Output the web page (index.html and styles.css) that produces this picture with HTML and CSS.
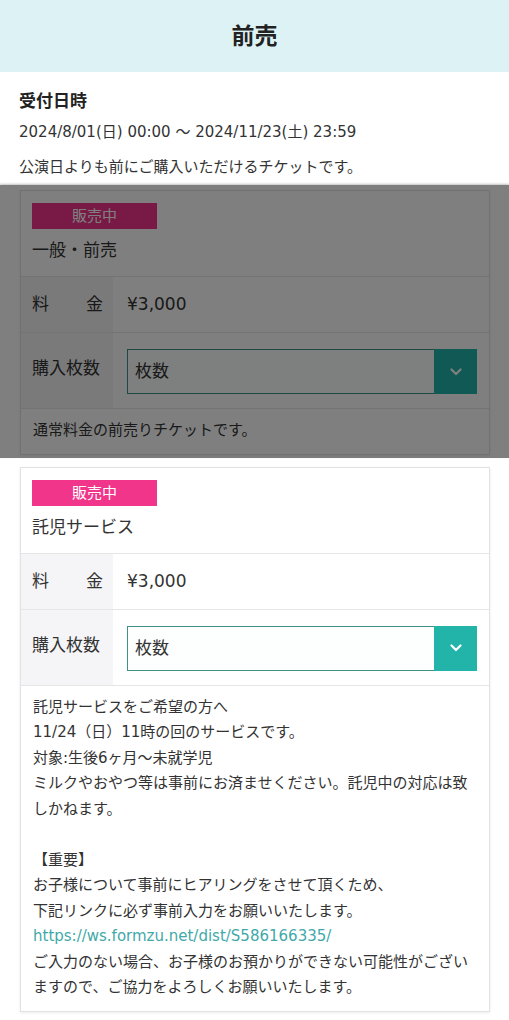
FILE: index.html
```html
<!DOCTYPE html>
<html lang="ja">
<head>
<meta charset="utf-8">
<title>前売</title>
<link rel="stylesheet" href="styles.css">
</head>
<body>
<header class="page-head"><h1 class="page-title">前売</h1></header>
<main class="content">
  <section class="intro">
    <h2 class="intro-head">受付日時</h2>
    <p class="intro-date">2024/8/01(日) 00:00 ～ 2024/11/23(土) 23:59</p>
    <p class="intro-desc">公演日よりも前にご購入いただけるチケットです。</p>
  </section>

  <div class="card">
    <div class="card-top">
      <span class="badge">販売中</span>
      <div class="card-title">一般・前売</div>
    </div>
    <div class="row row-price">
      <div class="row-label"><span class="justify">料金</span></div>
      <div class="row-value">¥3,000</div>
    </div>
    <div class="row row-qty">
      <div class="row-label">購入枚数</div>
      <div class="row-value">
        <div class="select"><span class="select-text">枚数</span><span class="select-btn"><svg width="12" height="8" viewBox="0 0 12 8"><path d="M1.5 1.5 L6 6 L10.5 1.5" fill="none" stroke="#fff" stroke-width="2.2" stroke-linecap="round" stroke-linejoin="round"/></svg></span></div>
      </div>
    </div>
    <div class="card-note">通常料金の前売りチケットです。</div>
  </div>

  <div class="card">
    <div class="card-top">
      <span class="badge">販売中</span>
      <div class="card-title">託児サービス</div>
    </div>
    <div class="row row-price">
      <div class="row-label"><span class="justify">料金</span></div>
      <div class="row-value">¥3,000</div>
    </div>
    <div class="row row-qty">
      <div class="row-label">購入枚数</div>
      <div class="row-value">
        <div class="select"><span class="select-text">枚数</span><span class="select-btn"><svg width="12" height="8" viewBox="0 0 12 8"><path d="M1.5 1.5 L6 6 L10.5 1.5" fill="none" stroke="#fff" stroke-width="2.2" stroke-linecap="round" stroke-linejoin="round"/></svg></span></div>
      </div>
    </div>
    <div class="card-note">託児サービスをご希望の方へ<br>11/24（日）11時の回のサービスです。<br>対象:生後6ヶ月～未就学児<br>ミルクやおやつ等は事前にお済ませください。託児中の対応は致しかねます。<br><br>【重要】<br>お子様について事前にヒアリングをさせて頂くため、<br>下記リンクに必ず事前入力をお願いいたします。<br><a class="link" href="#">https://ws.formzu.net/dist/S586166335/</a><br>ご入力のない場合、お子様のお預かりができない可能性がございますので、ご協力をよろしくお願いいたします。</div>
  </div>
</main>
<div class="overlay"></div>
</body>
</html>
```
FILE: styles.css
```css
* { box-sizing: border-box; }
html, body { margin: 0; padding: 0; }
body {
  font-family: "DejaVu Sans", "Noto Sans CJK JP", sans-serif;
  color: #333;
  background: #fff;
  position: relative;
  min-height: 1020px;
}
.page-head {
  background: #ddf2f4;
  height: 72px;
  display: flex;
  align-items: center;
  justify-content: center;
}
.page-title {
  margin: 0;
  font-size: 23px;
  font-weight: 700;
  color: #222;
  line-height: 1;
}
.content { padding: 0 19px 0 20px; }
.intro { padding: 15px 0 11px; margin-left: -1px; }
.intro-head {
  margin: 0;
  font-size: 17px;
  font-weight: 700;
  line-height: 28px;
  color: #222;
}
.intro-date {
  margin: 5px 0 0;
  font-size: 15px;
  line-height: 24px;
}
.intro-desc {
  margin: 11px 0 0;
  font-size: 15px;
  line-height: 24px;
}
.card {
  border: 1px solid #e2e2e2;
  box-shadow: 0 1px 3px rgba(0,0,0,0.08);
  background: #fff;
  margin-bottom: 12px;
}
.card-top {
  padding: 12px 12px 12px 11px;
  border-bottom: 1px solid #e6e6e6;
}
.badge {
  display: block;
  width: 125px;
  height: 26px;
  line-height: 26px;
  background: #f0358a;
  color: #fff;
  font-size: 15px;
  text-align: center;
}
.card-title {
  margin-top: 8px;
  font-size: 17px;
  line-height: 27px;
}
.row {
  display: flex;
  border-bottom: 1px solid #e6e6e6;
}
.row-label {
  width: 92px;
  flex: none;
  background: #f5f5f7;
  padding: 0 10px 0 11px;
  font-size: 17px;
  line-height: 27px;
}
.justify {
  display: block;
  text-align: justify;
  text-align-last: justify;
}
.row-value {
  flex: 1;
  padding: 0 12px 0 14px;
  font-size: 17px;
  line-height: 27px;
}
.row-price .row-label, .row-price .row-value { padding-top: 14px; padding-bottom: 14px; }
.row-price { height: 56px; }
.row-qty { height: 76px; }
.row-qty .row-label { padding-top: 22px; }
.row-qty .row-value { padding-top: 16px; }
.select {
  display: flex;
  height: 45px;
  border: 1px solid #3f9189;
  background: #fdfffe;
}
.select-text {
  flex: 1;
  padding-left: 7px;
  font-size: 17px;
  line-height: 43px;
  color: #333;
}
.select-btn {
  width: 43px;
  margin: -1px -1px -1px 0;
  background: #22b3a9;
  display: flex;
  align-items: center;
  justify-content: center;
}
.card-note {
  padding: 9px 12px 10px 12px;
  font-size: 15px;
  line-height: 25.5px;
}
.link { color: #3fa9a9; text-decoration: none; }
.overlay {
  position: absolute;
  left: 0;
  right: 0;
  top: 185px;
  height: 273px;
  background: rgba(0,0,0,0.5);
  box-shadow: 0 -1px 2px rgba(0,0,0,0.25);
}
```
